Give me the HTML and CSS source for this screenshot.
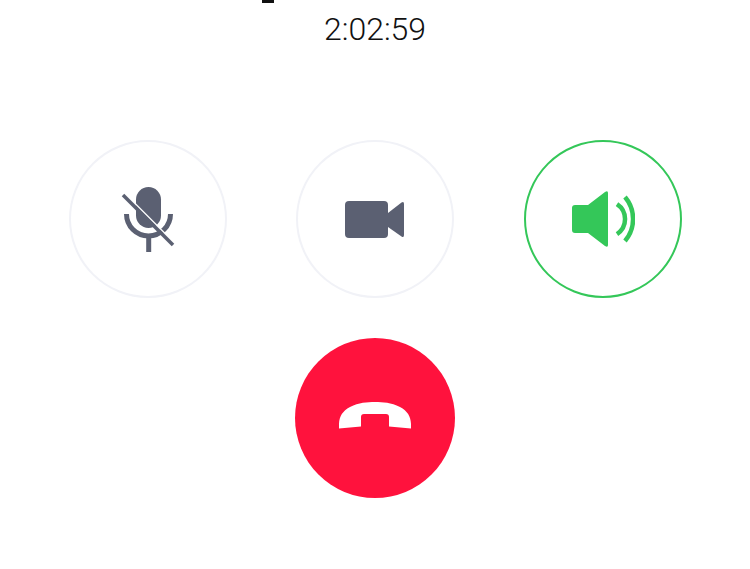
FILE: index.html
```html
<!DOCTYPE html>
<html lang="en">
<head>
<meta charset="utf-8">
<title>Call</title>
<link rel="stylesheet" href="styles.css">
</head>
<body>
<main class="call">
  <div class="name-clip"><span class="name-stub"></span></div>
  <div class="timer">2:02:59</div>
  <div class="controls">
    <button class="control" aria-label="Mute">
      <svg class="icon" width="60" height="70" viewBox="0 0 60 70">
        <rect x="18" y="3" width="25" height="41" rx="12.500" fill="#5b6072"/>
        <path d="M8.500 30A22 22 0 0 0 52.500 30" fill="none" stroke="#5b6072" stroke-width="5"/>
        <path d="M30.700 52v16" fill="none" stroke="#5b6072" stroke-width="5"/>
        <path d="M5 11L55 61" fill="none" stroke="#fff" stroke-width="1.500" transform="translate(1.800 -1.800)"/>
        <path d="M5 11L55 61" fill="none" stroke="#5b6072" stroke-width="3.500"/>
      </svg>
    </button>
    <button class="control" aria-label="Camera">
      <svg class="icon" width="60" height="40" viewBox="0 0 60 40">
        <rect x="0" y="2" width="43" height="37" rx="4" fill="#5b6072"/>
        <path d="M43 14L56.500 3.500Q59 2 59 5V36Q59 39 56.500 37.500L43 28Z" fill="#5b6072"/>
      </svg>
    </button>
    <button class="control control-on" aria-label="Speaker">
      <svg class="icon" width="64" height="56" viewBox="0 0 64 56">
        <path d="M4 14H17L34 1Q37 -1 37 2V54Q37 57 34 55L17 42H4Q1 42 1 39V17Q1 14 4 14Z" fill="#34c759"/>
        <path d="M46 13A18 18 0 0 1 46 43" fill="none" stroke="#34c759" stroke-width="4.500"/>
        <path d="M54 6A34 34 0 0 1 54 50" fill="none" stroke="#34c759" stroke-width="4.500"/>
      </svg>
    </button>
  </div>
  <button class="end" aria-label="End call">
    <svg class="end-icon" width="72" height="27" viewBox="0 0 72 27">
      <path d="M0 26.500C-0.500 16 2 10 11 5C20 0.500 28 0 36 0C44 0 52 0.500 61 5C70 10 72.500 16 72 26.500L50 24.500V15Q50 12 47 12H25Q22 12 22 15V24.500Z" fill="#fff"/>
    </svg>
  </button>
</main>
</body>
</html>
```

FILE: styles.css
```css
html, body {
  margin: 0;
  padding: 0;
  background: #fff;
}

.call {
  width: 750px;
  height: 569px;
  overflow: hidden;
  display: flex;
  flex-direction: column;
  align-items: center;
}

.name-clip {
  align-self: stretch;
  height: 3px;
  padding-left: 262px;
}

.name-stub {
  display: block;
  width: 12px;
  height: 3px;
  background: #111;
}

.timer {
  margin-top: 9px;
  height: 34px;
  line-height: 34px;
  font-family: Roboto, "Liberation Sans", sans-serif;
  font-weight: 300;
  font-size: 32px;
  color: #111;
}

.controls {
  align-self: stretch;
  display: flex;
  gap: 69px;
  padding-left: 69px;
  margin-top: 94px;
}

.control {
  width: 158px;
  height: 158px;
  padding: 0;
  box-sizing: border-box;
  border: 2px solid #f1f2f7;
  border-radius: 50%;
  background: #fff;
  display: flex;
  align-items: center;
  justify-content: center;
}

.control-on {
  margin-left: 1px;
  border-color: #34c759;
}

.end {
  margin-top: 40px;
  width: 160px;
  height: 160px;
  padding: 0;
  border: 0;
  border-radius: 50%;
  background: #ff123d;
  display: flex;
  align-items: center;
  justify-content: center;
}

.end-icon {
  margin-bottom: 5px;
}
```
